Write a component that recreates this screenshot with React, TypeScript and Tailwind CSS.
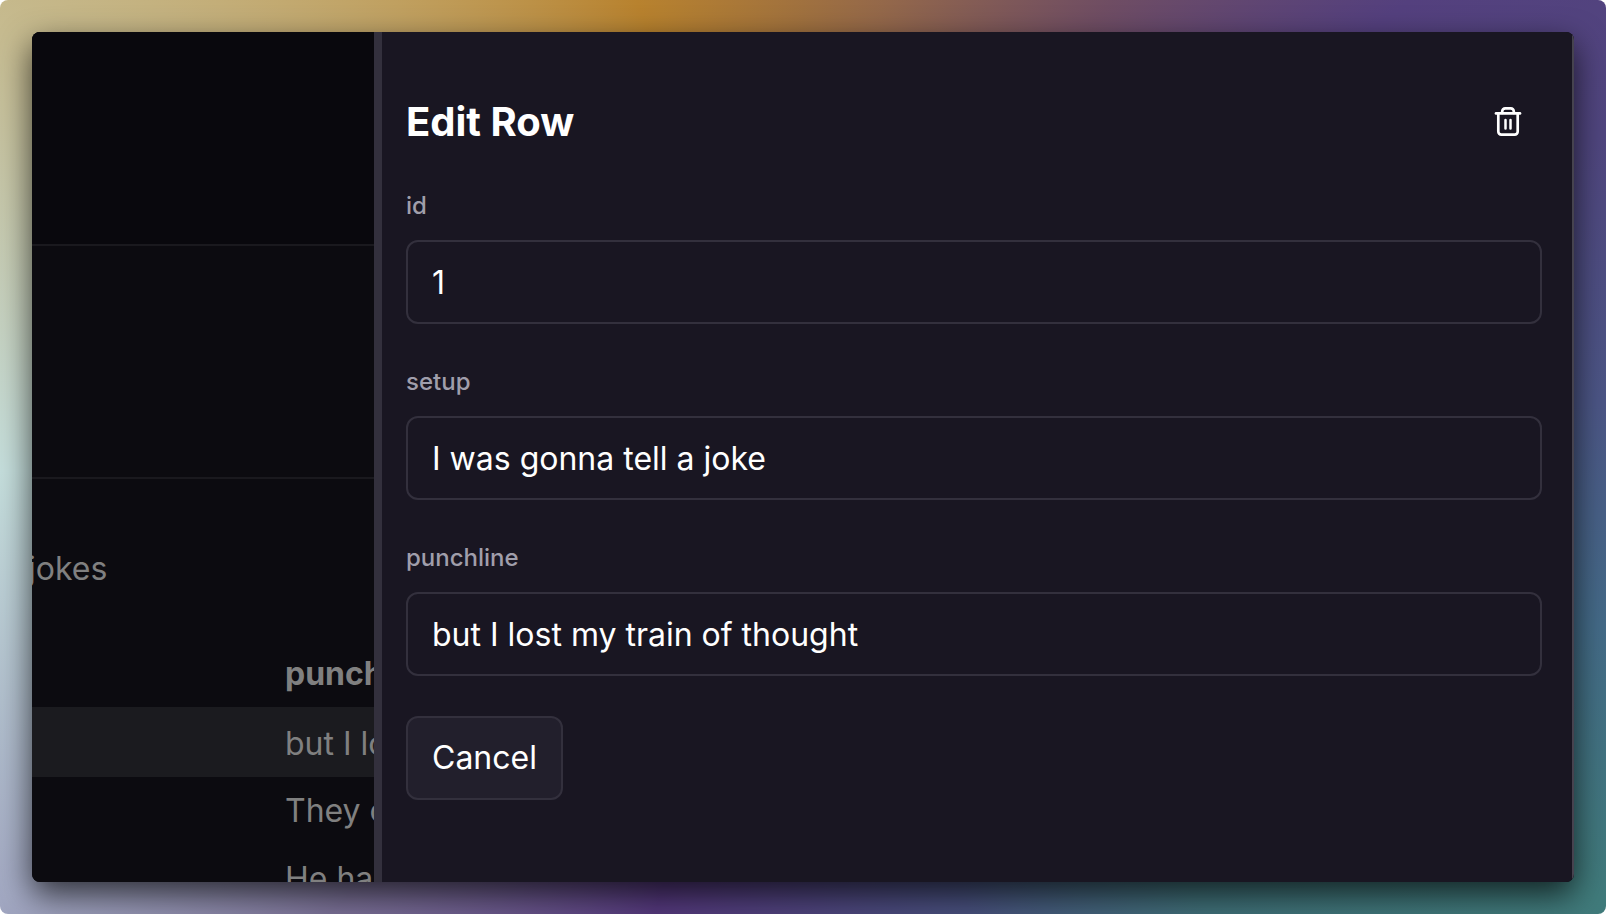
import { useState } from "react";

type Field = { name: string; value: string };

const fields: Field[] = [
  { name: "id", value: "1" },
  { name: "setup", value: "I was gonna tell a joke" },
  { name: "punchline", value: "but I lost my train of thought" },
];

function TrashIcon() {
  return (
    <svg
      viewBox="0 0 32 32"
      className="size-8"
      fill="none"
      stroke="currentColor"
      strokeWidth="2.7"
      strokeLinecap="round"
      strokeLinejoin="round"
      aria-hidden="true"
    >
      <path d="M4 7.4h24" />
      <path d="M10.2 7V5.4a3 3 0 0 1 3-3h5.6a3 3 0 0 1 3 3V7" />
      <path d="M6.3 7.4v18.2a3 3 0 0 0 3 3h13.4a3 3 0 0 0 3-3V7.4" />
      <path d="M13.5 14v8.4M18.5 14v8.4" strokeWidth="2.5" />
    </svg>
  );
}

function Sheet() {
  return (
    <section className="flex min-w-0 basis-[342px] flex-col overflow-hidden bg-[#0c0b10] text-[32px] leading-10 text-[#808080]">
      <div className="h-[214px] shrink-0 border-b-2 border-[#1a191e] bg-[#09080d]" />
      <div className="h-[233px] shrink-0 border-b-2 border-[#1a191e]" />
      <p className="-ml-1 mt-[70px] shrink-0">jokes</p>
      <table className="mt-[52px] w-full table-fixed border-collapse whitespace-nowrap text-left">
        <thead>
          <tr className="h-[66px]">
            <th className="overflow-hidden pl-[253px] font-bold">punchline</th>
          </tr>
        </thead>
        <tbody>
          <tr className="h-[70px] bg-[#1b1b1f]">
            <td className="overflow-hidden pl-[253px] pt-1">but I lost my train of thought</td>
          </tr>
          <tr className="h-[68px]">
            <td className="overflow-hidden pl-[253px]">They only work</td>
          </tr>
          <tr className="h-[68px]">
            <td className="overflow-hidden pl-[253px]">He had</td>
          </tr>
        </tbody>
      </table>
    </section>
  );
}

export default function App() {
  const [values, setValues] = useState(fields);
  const update = (name: string, value: string) =>
    setValues((rows) => rows.map((r) => (r.name === name ? { name, value } : r)));

  return (
    <div className="bg-white font-['Inter',sans-serif]">
      <main className="flex h-screen rounded-lg bg-[conic-gradient(#a0713f_0deg,#94684a_10deg,#6f4d63_34deg,#54407e_53deg,#50467f_68deg,#4c5686_86deg,#446b88_102deg,#407b7b_119deg,#3f6f77_138deg,#474f7c_160deg,#54387c_198deg,#7a7096_226deg,#a2a8c2_241deg,#c5dedc_269deg,#c6bb90_298deg,#c0a060_318deg,#b8822e_340deg,#a0713f_360deg)] p-8">
        <div className="flex min-w-0 flex-1 overflow-hidden rounded-lg bg-[#0c0b10] shadow-[0_12px_32px_rgba(0,0,0,0.7)]">
          <Sheet />
          <form
            className="flex min-w-0 flex-1 flex-col items-start border-l-8 border-r-2 border-l-[#33303d] border-r-[#46434f] bg-[#191622] pb-8 pl-6 pr-[30px] pt-[66px] text-white"
            onSubmit={(e) => e.preventDefault()}
          >
            <header className="flex w-full items-center justify-between pr-[18px]">
              <h1 className="text-[40px] font-bold leading-12">Edit Row</h1>
              <button type="button" aria-label="Delete row">
                <TrashIcon />
              </button>
            </header>
            <div className="mt-10 flex w-full flex-col gap-[38px]">
              {values.map((f) => (
                <div key={f.name} className="flex flex-col gap-[14px]">
                  <label htmlFor={f.name} className="text-2xl leading-10 font-medium text-[#a09eab]">
                    {f.name}
                  </label>
                  <input
                    id={f.name}
                    value={f.value}
                    onChange={(e) => update(f.name, e.target.value)}
                    className="h-[84px] w-full rounded-xl border-2 border-[#33303d] bg-transparent px-6 text-[32px] outline-none"
                  />
                </div>
              ))}
            </div>
            <button
              type="button"
              className="mt-10 h-[84px] rounded-xl border-2 border-[#33303d] bg-[#221f2c] px-6 text-[32px]"
            >
              Cancel
            </button>
          </form>
        </div>
      </main>
    </div>
  );
}
